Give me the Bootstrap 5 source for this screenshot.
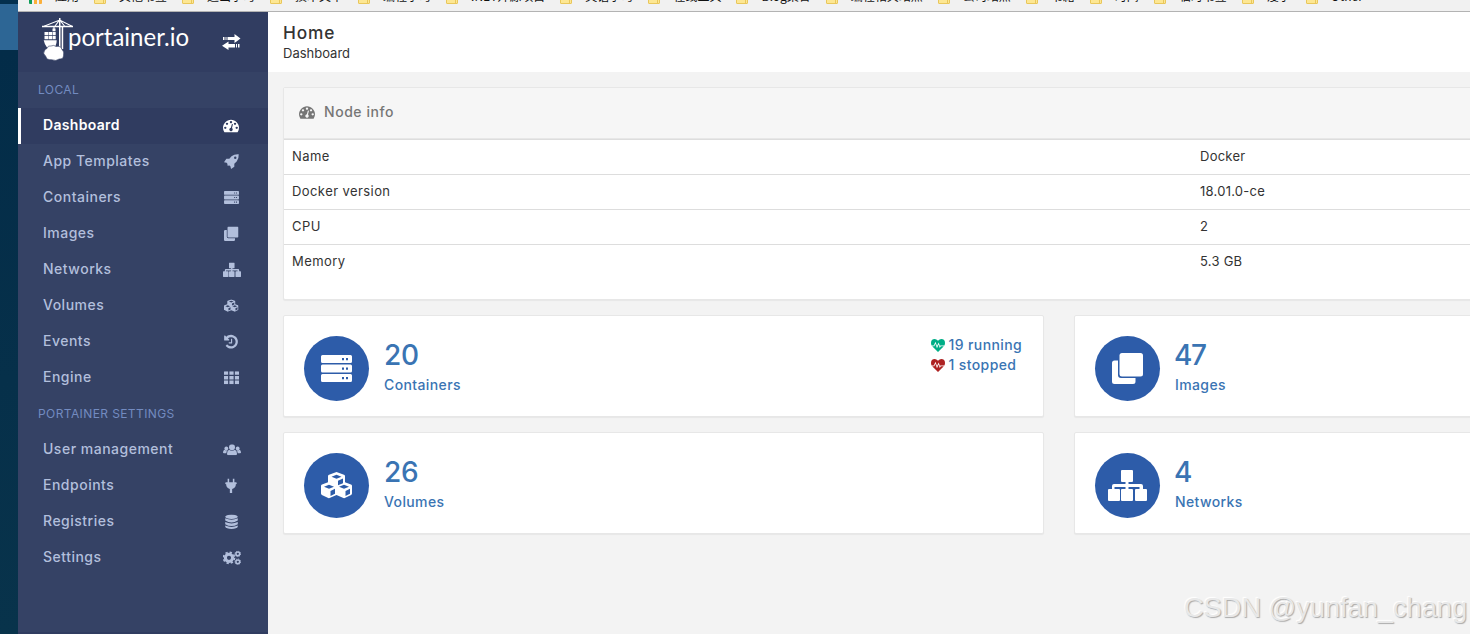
<!DOCTYPE html>
<html lang="en">
<head>
<meta charset="utf-8">
<title>Portainer</title>
<link href="https://cdn.jsdelivr.net/npm/bootstrap@5.3.0/dist/css/bootstrap.min.css" rel="stylesheet">
<style>
body{font-family:Inter,"Noto Sans CJK SC",sans-serif;font-size:13px;line-height:20px;color:#333;background:#f3f3f3;height:634px}
.desk{width:18px;background:linear-gradient(#04304e 0 4px,#2d6695 4px 50px,#032c48 50px,#06304a 380px,#08334b 634px)}
.bookmarks{height:12px;background:#f1f1f1;border-bottom:1px solid #b3b3b3;padding-left:11px;font:12px/16px "Noto Sans CJK SC",sans-serif;color:#111}
.bookmarks>div{margin-top:-12px;height:16px;gap:13px;margin-right:15px;white-space:nowrap}
.bookmarks i{width:12px;height:10px;margin-top:6px;background:#fde793;border:1px solid #e9c75b;border-radius:1px;box-shadow:inset -1px 0 #fde793,inset -2px 0 #e9c75b}
.bookmarks .apps{width:13px;background:linear-gradient(90deg,#0f9d58 0 3px,transparent 3px 5px,#fbb03b 5px 8px,transparent 8px 10px,#fbb03b 10px);border:0;box-shadow:none}
.side{width:250px;background:#354265;border-bottom:2px solid #303c60}
.brand{height:60px;background:#313d61}
.side-title{height:36px;padding-left:20px;line-height:36px;font-size:12px;color:#738bc0;letter-spacing:.4px}
.side a{height:36px;line-height:33px;padding:0 27px 0 22px;border-left:3px solid transparent;color:#b2bfdc;font-size:14px;font-weight:500;letter-spacing:.5px}
.side a.active{background:#303c60;border-left-color:#fff;color:#fff;font-weight:600;letter-spacing:.32px}
.side a svg{width:20px;height:18px;margin-top:10px}
svg{fill:currentColor;display:block}
.pagehead{height:60px;background:#fff;padding:11px 15px}
.pagehead h1{font-size:17.300px;line-height:20px;font-weight:500;margin:0;letter-spacing:.9px}
.wide{width:1582px;padding:15px}
.panel{background:#fff;border:1px solid #e7e7e7;border-radius:2px;box-shadow:0 1px 1px rgba(0,0,0,.05)}
.panel-top{height:51px;background:#f6f6f6;border-bottom:1px solid #e7e7e7;color:#767676;font-size:14px;font-weight:500;padding:0 15px 2px;gap:9px;letter-spacing:.55px}
.info{margin:0;font-size:13px;letter-spacing:.42px;color:#333}
.info td{height:35px;padding:6px 8px 8px;line-height:20px;border:0;border-top:1px solid #ddd;color:#333;background:none}
.info td:first-child{width:908px}
.info td+td{letter-spacing:.25px}
.node{height:213px}
.cards{grid-template-columns:761px 761px;gap:15px 30px;margin-top:15px}
.widget{height:102px;padding:20px;color:#3a74b3;font-size:14px;font-weight:500;letter-spacing:.38px}
.disc{width:65px;height:65px;background:#2d5ca9;color:#fff}
.facts{margin-left:15px}
.num{font-size:28px;line-height:36px;padding-top:1px;letter-spacing:-.2px}
.num.tight{letter-spacing:-1.500px;margin-left:-1px}
.lbl{line-height:20px;margin-top:2px}
.states{margin:-1px 1px 0 auto;line-height:20px}
.wm{right:3px;bottom:9px;font:27.200px/34px "Liberation Sans",sans-serif;color:#e8e8e8;text-shadow:1px 1px 1px #aaa,-1px -1px 1px #fff}
</style>
</head>
<body class="d-flex overflow-hidden position-relative">
<svg width="0" height="0" class="position-absolute">
<symbol id="tach" viewBox="0 0 1792 1792"><path d="M384 1152q0-53-37.500-90.500t-90.500-37.500-90.500 37.500-37.500 90.500 37.500 90.500 90.500 37.500 90.500-37.500 37.500-90.500zm192-448q0-53-37.500-90.500t-90.500-37.500-90.500 37.500-37.500 90.500 37.500 90.500 90.500 37.500 90.500-37.500 37.500-90.500zm428 481l101-382q6-26-7.500-48.500t-38.500-29.500-48 6.500-30 39.500l-101 382q-60 5-107 43.500t-63 98.500q-20 77 20 146t117 89 146-20 89-117q16-60-6-117t-72-91zm660-33q0-53-37.500-90.500t-90.500-37.500-90.500 37.500-37.500 90.500 37.500 90.500 90.500 37.500 90.500-37.500 37.500-90.500zm-640-640q0-53-37.500-90.500t-90.500-37.500-90.500 37.500-37.500 90.500 37.500 90.500 90.500 37.500 90.500-37.500 37.500-90.500zm448 192q0-53-37.500-90.500t-90.500-37.500-90.500 37.500-37.500 90.500 37.500 90.500 90.500 37.500 90.500-37.500 37.500-90.500zm320 448q0 261-141 483-19 29-54 29h-1402q-35 0-54-29-141-221-141-483 0-182 71-348t191-286 286-191 348-71 348 71 286 191 191 286 71 348z"/></symbol>
<symbol id="hist" viewBox="0 0 1792 1792"><path d="M1664 896q0 156-61 298t-164 245-245 164-298 61q-172 0-327-72.500t-264-204.500q-7-10-6.500-22.500t8.500-20.500l137-138q10-9 25-9 16 2 23 12 73 95 179 147t225 52q104 0 198.500-40.500t163.500-109.500 109.500-163.500 40.500-198.500-40.500-198.500-109.500-163.500-163.500-109.500-198.500-40.500q-98 0-188 35.500t-160 101.500l137 138q31 30 14 69-17 40-59 40h-448q-26 0-45-19t-19-45v-448q0-42 40-59 39-17 69 14l130 129q107-101 244.500-156.500t284.500-55.500q156 0 298 61t245 164 164 245 61 298zm-640-288v448q0 14-9 23t-23 9h-320q-14 0-23-9t-9-23v-64q0-14 9-23t23-9h224v-352q0-14 9-23t23-9h64q14 0 23 9t9 23z"/></symbol>
<symbol id="beat" viewBox="0 0 14 13"><path d="M7 13L1.200 7.300H3.300L4.400 4.800 6 9.300 7.600 5.600 8.800 8.900 9.800 7.300H12.800zM.6 6.400Q0 5.300 0 3.900 0 0 3.700 0 5.400 0 7 1.700 8.600 0 10.300 0 14 0 14 3.900q0 1.400-.6 2.500H9.300l-.4.600-1.200-3.600L6 7 4.500 2.800 2.800 6.400z"/></symbol>
<symbol id="server" viewBox="0 0 31 27"><path fill-rule="evenodd" d="M1.500 0h28q1.500 0 1.500 1.500v5q0 1.500-1.500 1.500h-28Q0 8 0 6.500v-5Q0 0 1.500 0zM21 3v2.200h2V3zM25 3v2.200h2V3zM1.500 9.500h28q1.500 0 1.500 1.500v5q0 1.500-1.500 1.500h-28Q0 17.500 0 16v-5q0-1.500 1.500-1.500zM21 12.500v2.200h2v-2.200zM25 12.500v2.200h2v-2.200zM1.500 19h28q1.500 0 1.500 1.500v5q0 1.500-1.500 1.500h-28Q0 27 0 25.500v-5Q0 19 1.500 19zM21 22v2.200h2V22zM25 22v2.200h2V22z"/></symbol>
<symbol id="clone" viewBox="0 0 31 31"><rect x="7.500" width="23.500" height="23.500" rx="2.500"/><path d="M2.500 7.500H6V22q0 3 3 3h14.500v3.500q0 2.500-2.500 2.500H2.500Q0 31 0 28.500V10q0-2.500 2.500-2.500z"/></symbol>
<symbol id="tree" viewBox="0 0 39 31"><path d="M14 0h10q1 0 1 1v10q0 1-1 1h-3.500v2H33q2 0 2 2v3h3q1 0 1 1v10q0 1-1 1H28q-1 0-1-1V20q0-1 1-1h3.500v-2h-11v2H24q1 0 1 1v10q0 1-1 1H14q-1 0-1-1V20q0-1 1-1h3.500v-2h-11v2H11q1 0 1 1v10q0 1-1 1H1q-1 0-1-1V20q0-1 1-1h3v-3q0-2 2-2h11.500v-2H14q-1 0-1-1V1q0-1 1-1z"/></symbol>
<symbol id="cubes" viewBox="0 0 31 27"><path fill-rule="evenodd" d="M15.500 0L23 2.800q1 .4 1 1.500v6l6 2.300q1 .4 1 1.500v7.400q0 1-.9 1.400l-6.300 3.200q-.7.300-1.400 0L15.500 23l-6.900 3.100q-.7.300-1.400 0L.9 22.900Q0 22.500 0 21.500v-7.400q0-1.100 1-1.500l6-2.300v-6q0-1.100 1-1.500zM15.500 2.800L10.500 4.700l5 2L20.500 4.700zM17 8.700v4.500l5-2V6.500zM8 12.800l-5 1.900 5 2 5-2zM9.500 18.900v5l4.500-2.200v-4.900zM23 12.800l-5 1.900 5 2 5-2zM24.500 18.900v5l4.500-2.200v-4.900z"/></symbol>
<symbol id="rocket" viewBox="0 0 16 16"><path fill-rule="evenodd" d="M15.700.3Q16 5 13.500 8L11 10.300v3.200L7.500 16l-.7-3-1-.8-2 .2-.2-2-.8-1L0 8.700 2.500 5h3.200L8 2.500Q11 0 15.700.3zM12 2.700a1.300 1.300 0 1 0 0 2.600 1.300 1.300 0 0 0 0-2.600z"/></symbol>
<symbol id="grid" viewBox="0 0 15 13"><path d="M0 .5Q0 0 .5 0h3.600v3.600H0zM5.400 0h4.200v3.600H5.400zM10.900 0h3.600q.5 0 .5.500v3.100h-4.100zM0 4.700h4.100v3.600H0zM5.400 4.700h4.200v3.600H5.400zM10.900 4.700H15v3.600h-4.100zM0 9.400h4.100V13H.5q-.5 0-.5-.5zM5.400 9.400h4.200V13H5.400zM10.900 9.400H15v3.100q0 .5-.5.500h-3.600z"/></symbol>
<symbol id="users" viewBox="0 0 18 11"><circle cx="9" cy="3" r="3"/><circle cx="3.300" cy="4.200" r="1.900"/><circle cx="14.700" cy="4.200" r="1.900"/><path d="M6 5.500q3 2 6 0 2 1 2 4 0 1.500-1.500 1.500h-7Q4 11 4 9.500q0-3 2-4zM0 8.200q0-2 1.500-2.700 1.600 1.200 3 .3-1.100 1.300-1.200 3.200H1q-1 0-1-.8zM18 8.200q0-2-1.500-2.700-1.600 1.200-3 .3 1.100 1.300 1.200 3.200H17q1 0 1-.8z"/></symbol>
<symbol id="plug" viewBox="0 0 12 15"><path d="M2.500 0h1.600v4h3.800V0h1.600v4H11q1 0 1 1t-1 1q0 4-3.800 4.800V15H4.800v-4.200Q1 10 1 6 0 6 0 5t1-1h1.500z"/></symbol>
<symbol id="db" viewBox="0 0 13 15"><ellipse cx="6.500" cy="2.300" rx="6.500" ry="2.300"/><path d="M0 4q6.500 3 13 0v2.300q-6.500 4-13 0zM0 7.700q6.500 3 13 0V10q-6.500 4-13 0zM0 11.400q6.500 3 13 0v1.400q-1 2.200-6.500 2.200T0 12.800z"/></symbol>
<symbol id="cogs" viewBox="0 0 18 14"><g fill="none" stroke="currentColor"><circle cx="6" cy="7" r="3.600" stroke-width="3"/><circle cx="6" cy="7" r="5.500" stroke-width="1.700" stroke-dasharray="2.300 2.020"/><circle cx="14.800" cy="3" r="1.900" stroke-width="1.500"/><circle cx="14.800" cy="3" r="2.800" stroke-width=".9" stroke-dasharray="1.200 1"/><circle cx="14.800" cy="11" r="1.900" stroke-width="1.500"/><circle cx="14.800" cy="11" r="2.800" stroke-width=".9" stroke-dasharray="1.200 1"/></g></symbol>
</svg>
<div class="desk flex-shrink-0"></div>
<div class="flex-grow-1 d-flex flex-column overflow-hidden">
 <div class="bookmarks d-flex flex-shrink-0 overflow-hidden">
  <div class="d-flex"><i class="apps"></i><span>应用</span></div><div class="d-flex"><i></i><span>其他书签</span></div><div class="d-flex"><i></i><span>进出学习</span></div><div class="d-flex"><i></i><span>技术文章</span></div><div class="d-flex"><i></i><span>编程学习</span></div><div class="d-flex"><i></i><span>.NET开源项目</span></div><div class="d-flex"><i></i><span>英语学习</span></div><div class="d-flex"><i></i><span>在线工具</span></div><div class="d-flex"><i></i><span>Blog集合</span></div><div class="d-flex"><i></i><span>编程相关站点</span></div><div class="d-flex"><i></i><span>公司站点</span></div><div class="d-flex"><i></i><span>书籍</span></div><div class="d-flex"><i></i><span>时间</span></div><div class="d-flex"><i></i><span>临时书签</span></div><div class="d-flex"><i></i><span>漫学</span></div><div class="d-flex"><i></i><span>Other</span></div>
 </div>
 <div class="d-flex flex-grow-1 overflow-hidden">
  <nav class="side flex-shrink-0">
   <div class="brand text-white">
    <svg width="250" height="60" viewBox="18 12 250 60">
     <path d="M42 25.700h31v1.600H42zM59 18h1.500v32H59zM61.700 27h1.500v22h-1.500z"/><path d="M44 26.200L59.700 20 72 26.200M55 26l4.700-6 4.800 6M54 27v4" fill="none" stroke="#fff" stroke-width="1.100"/>
     <path d="M44.500 32h3.500v3.300h-3.500zM48.500 32H52v3.300h-3.500zM52.500 32h3.200v3.300h-3.200zM44.500 35.900h3.500v3.300h-3.500zM48.500 35.900H52v3.300h-3.500zM52.500 35.900h3.200v3.300h-3.200zM52.500 28.500h3v2.800h-3zM43.700 40.200h13q0 7-5 9-6 0-8-9z"/>
     <path d="M47 48.500q1-3.500 4-2.500 3-1.500 5 .5 5-1 6 3 2.500 2 1.500 6 0 3.800-4.300 3.500-3.200 2.500-7.500.7-5 .5-6-3.500-3.500-3-1-5.700.3-1.500 2.300-2z" stroke="#313d61" stroke-width=".6"/>
     <text x="68" y="45.700" font-family="Lato,sans-serif" font-size="25" textLength="121" lengthAdjust="spacingAndGlyphs">portainer.io</text>
     <path d="M223 37h1.500v3H223zM225.500 37h1v3h-1zM227.500 37h7v-3l6 4.500-6 4.500v-3h-7zM239.500 44v3.500H238V44zM237 44v3.500h-1V44zM235 44h-6.500v-2.500l-6.500 4.300 6.500 4.200v-2.500h6.500z"/>
    </svg>
   </div>
   <div class="side-title">LOCAL</div>
   <a class="active d-flex justify-content-between text-decoration-none" href="#">Dashboard<svg viewBox="0 0 20 18"><use href="#tach" x="2" y="-.5" width="16" height="16"/></svg></a>
   <a class="d-flex justify-content-between text-decoration-none" href="#">App Templates<svg viewBox="0 0 20 18"><use href="#rocket" x="3" y="0" width="15" height="15"/></svg></a>
   <a class="d-flex justify-content-between text-decoration-none" href="#">Containers<svg viewBox="0 0 20 18"><use href="#server" x="3" y="1" width="15" height="13"/></svg></a>
   <a class="d-flex justify-content-between text-decoration-none" href="#">Images<svg viewBox="0 0 20 18"><use href="#clone" x="3" y=".5" width="14.500" height="14.500"/></svg></a>
   <a class="d-flex justify-content-between text-decoration-none" href="#">Networks<svg viewBox="0 0 20 18"><use href="#tree" x="2" y=".5" width="18" height="14.500"/></svg></a>
   <a class="d-flex justify-content-between text-decoration-none" href="#">Volumes<svg viewBox="0 0 20 18"><use href="#cubes" x="3" y="1.200" width="14.500" height="13"/></svg></a>
   <a class="d-flex justify-content-between text-decoration-none" href="#">Events<svg viewBox="0 0 20 18"><use href="#hist" x="2" y="-.3" width="16" height="16"/></svg></a>
   <a class="d-flex justify-content-between text-decoration-none" href="#">Engine<svg viewBox="0 0 20 18"><use href="#grid" x="3" y="1.200" width="15" height="13"/></svg></a>
   <div class="side-title">PORTAINER SETTINGS</div>
   <a class="d-flex justify-content-between text-decoration-none" href="#">User management<svg viewBox="0 0 20 18"><use href="#users" x="2" y="2.300" width="18" height="11"/></svg></a>
   <a class="d-flex justify-content-between text-decoration-none" href="#">Endpoints<svg viewBox="0 0 20 18"><use href="#plug" x="4" y=".5" width="12" height="14.500"/></svg></a>
   <a class="d-flex justify-content-between text-decoration-none" href="#">Registries<svg viewBox="0 0 20 18"><use href="#db" x="4" y=".5" width="13" height="14.500"/></svg></a>
   <a class="d-flex justify-content-between text-decoration-none" href="#">Settings<svg viewBox="0 0 20 18"><use href="#cogs" x="2" y=".8" width="18" height="14"/></svg></a>
  </nav>
  <main class="flex-grow-1 overflow-hidden">
   <div class="pagehead"><h1>Home</h1><div>Dashboard</div></div>
   <div class="wide">
    <div class="panel node">
     <div class="panel-top d-flex align-items-center"><svg width="16" height="16"><use href="#tach"/></svg>Node info</div>
     <table class="table info"><tbody>
      <tr><td>Name</td><td>Docker</td></tr><tr><td>Docker version</td><td>18.01.0-ce</td></tr><tr><td>CPU</td><td>2</td></tr><tr><td>Memory</td><td>5.3 GB</td></tr>
     </tbody></table>
    </div>
    <div class="cards d-grid">
      <div class="panel widget d-flex"><div class="disc rounded-circle d-flex align-items-center justify-content-center"><svg width="31" height="27"><use href="#server"/></svg></div><div class="facts"><div class="num">20</div><div class="lbl">Containers</div></div>
       <div class="states"><div class="d-flex align-items-center"><svg width="14" height="13" class="me-1" color="#00ae87"><use href="#beat"/></svg>19 running</div><div class="d-flex align-items-center"><svg width="14" height="13" class="me-1" color="#ae2323"><use href="#beat"/></svg>1 stopped</div></div></div>
      <div class="panel widget d-flex"><div class="disc rounded-circle d-flex align-items-center justify-content-center"><svg width="31" height="31"><use href="#clone"/></svg></div><div class="facts"><div class="num tight">47</div><div class="lbl">Images</div></div></div>
      <div class="panel widget d-flex"><div class="disc rounded-circle d-flex align-items-center justify-content-center"><svg width="31" height="27"><use href="#cubes"/></svg></div><div class="facts"><div class="num">26</div><div class="lbl">Volumes</div></div></div>
      <div class="panel widget d-flex"><div class="disc rounded-circle d-flex align-items-center justify-content-center"><svg width="39" height="31"><use href="#tree"/></svg></div><div class="facts"><div class="num tight">4</div><div class="lbl">Networks</div></div></div>
    </div>
   </div>
  </main>
 </div>
</div>
<div class="wm position-absolute text-nowrap">CSDN @yunfan_chang</div>
<script src="https://cdn.jsdelivr.net/npm/bootstrap@5.3.0/dist/js/bootstrap.bundle.min.js"></script>
</body>
</html>
